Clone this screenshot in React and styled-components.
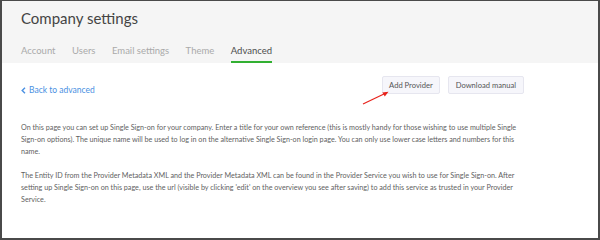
import React from "react";
import styled, { createGlobalStyle } from "styled-components";

const Global = createGlobalStyle`
  html, body { margin: 0; padding: 0; background: #fff; }
  body { font-family: Lato, "Open Sans", sans-serif; }
  * { box-sizing: border-box; }
`;

const Frame = styled.div`
  width: 600px;
  height: 240px;
  border: 2px solid #4a4a4a;
  border-top-width: 1px;
  background: #fff;
  display: flex;
  flex-direction: column;
  overflow: hidden;
`;

const Header = styled.header`
  background: #f5f5f5;
  padding: 7px 0 0 19px;
  display: flex;
  flex-direction: column;
`;

const Title = styled.h1`
  margin: 0;
  font-size: 15px;
  font-weight: 400;
  line-height: 20px;
  color: #444;
`;

const Tabs = styled.nav`
  display: flex;
  gap: 16.5px;
  margin-top: 17px;
`;

const Tab = styled.span`
  font-size: 9.5px;
  line-height: 12px;
  padding-bottom: 4px;
  color: ${(p) => (p.$active ? "#4d4d4d" : "#aaa")};
  border-bottom: 2px solid ${(p) => (p.$active ? "#32b032" : "transparent")};
`;

const Content = styled.main`
  padding: 13px 74px 0 19px;
  display: flex;
  flex-direction: column;
`;

const TopRow = styled.div`
  display: flex;
  align-items: flex-start;
  gap: 8px;
  position: relative;
`;

const BackLink = styled.a`
  font-size: 8.5px;
  line-height: 10px;
  color: #4a90e2;
  text-decoration: none;
  margin-right: auto;
  display: flex;
  align-items: center;
  gap: 3px;
  margin-top: 9px;
`;

const Button = styled.button`
  font-family: inherit;
  font-size: 7.6px;
  color: #555;
  background: #f6f6fb;
  border: 1px solid #e6e6ef;
  border-radius: 2px;
  height: 18px;
  padding: 0 ${(p) => p.$px || 7}px;
`;

const Arrow = styled.svg`
  position: absolute;
  left: 340px;
  top: 12px;
  overflow: visible;
`;

const Para = styled.p`
  margin: 0;
  font-size: 7.2px;
  line-height: 12px;
  color: #5f5f5f;
  margin-top: ${(p) => p.$mt || 0}px;
`;

export default function App() {
  return (
    <>
      <Global />
      <Frame>
        <Header>
          <Title>Company settings</Title>
          <Tabs>
            <Tab>Account</Tab>
            <Tab>Users</Tab>
            <Tab>Email settings</Tab>
            <Tab>Theme</Tab>
            <Tab $active>Advanced</Tab>
          </Tabs>
        </Header>
        <Content>
          <TopRow>
            <BackLink href="#">
              <svg width="5" height="7" viewBox="0 0 5 7">
                <path d="M4 0.8 L1.2 3.5 L4 6.2" fill="none" stroke="#4a90e2" strokeWidth="1.4" />
              </svg>
              Back to advanced
            </BackLink>
            <Arrow width="30" height="18">
              <line x1="2" y1="16" x2="25" y2="5" stroke="#e8231c" strokeWidth="1.2" />
              <path d="M27.5 3.8 L21.3 4.4 L23.8 8.6 Z" fill="#e8231c" />
            </Arrow>
            <Button $px={6}>Add Provider</Button>
            <Button>Download manual</Button>
          </TopRow>
          <Para $mt={27}>
            On this page you can set up Single Sign-on for your company. Enter a title for your own reference (this is mostly handy for those wishing to use multiple Single Sign-on options). The unique name will be used to log in on the alternative Single Sign-on login page. You can only use lower case letters and numbers for this name.
          </Para>
          <Para $mt={12}>
            The Entity ID from the Provider Metadata XML and the Provider Metadata XML can be found in the Provider Service you wish to use for Single Sign-on. After setting up Single Sign-on on this page, use the url (visible by clicking 'edit' on the overview you see after saving) to add this service as trusted in your Provider Service.
          </Para>
        </Content>
      </Frame>
    </>
  );
}
